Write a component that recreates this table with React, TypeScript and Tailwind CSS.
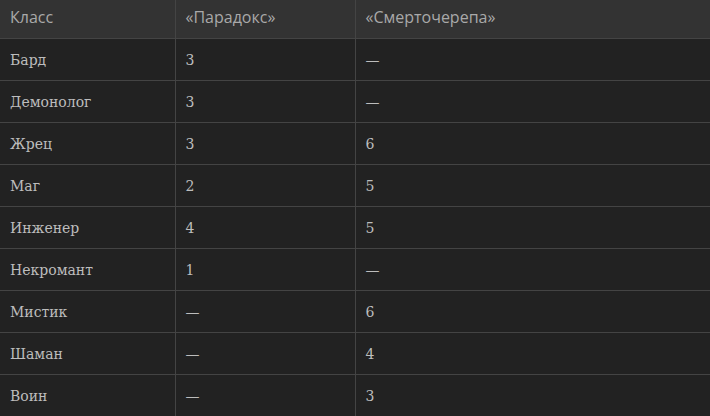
const rows: [string, string, string][] = [
  ['Бард', '3', '—'],
  ['Демонолог', '3', '—'],
  ['Жрец', '3', '6'],
  ['Маг', '2', '5'],
  ['Инженер', '4', '5'],
  ['Некромант', '1', '—'],
  ['Мистик', '—', '6'],
  ['Шаман', '—', '4'],
  ['Воин', '—', '3'],
];

const head = 'h-[38px] px-[10px] pb-[3px] text-left font-normal align-middle';
const cell = 'h-[42px] px-[10px] pt-[3px] align-middle border-t border-[#444]';

export default function App() {
  return (
    <div className="w-[710px] h-[416px] overflow-hidden bg-[#222]">
      <table className="w-full border-collapse table-fixed">
        <colgroup>
          <col className="w-[175px]" />
          <col className="w-[180px]" />
          <col />
        </colgroup>
        <thead>
          <tr className="bg-[#333] text-[#a9a9a9] text-[16px] font-['Open_Sans',sans-serif]">
            <th className={head}>Класс</th>
            <th className={`${head} border-l border-[#444]`}>«Парадокс»</th>
            <th className={`${head} border-l border-[#444]`}>«Смерточерепа»</th>
          </tr>
        </thead>
        <tbody className="text-[#bdbdbd] text-[14px] font-['DejaVu_Serif',serif]">
          {rows.map(([name, a, b]) => (
            <tr key={name}>
              <td className={cell}>{name}</td>
              <td className={`${cell} border-l`}>{a}</td>
              <td className={`${cell} border-l`}>{b}</td>
            </tr>
          ))}
        </tbody>
      </table>
    </div>
  );
}
